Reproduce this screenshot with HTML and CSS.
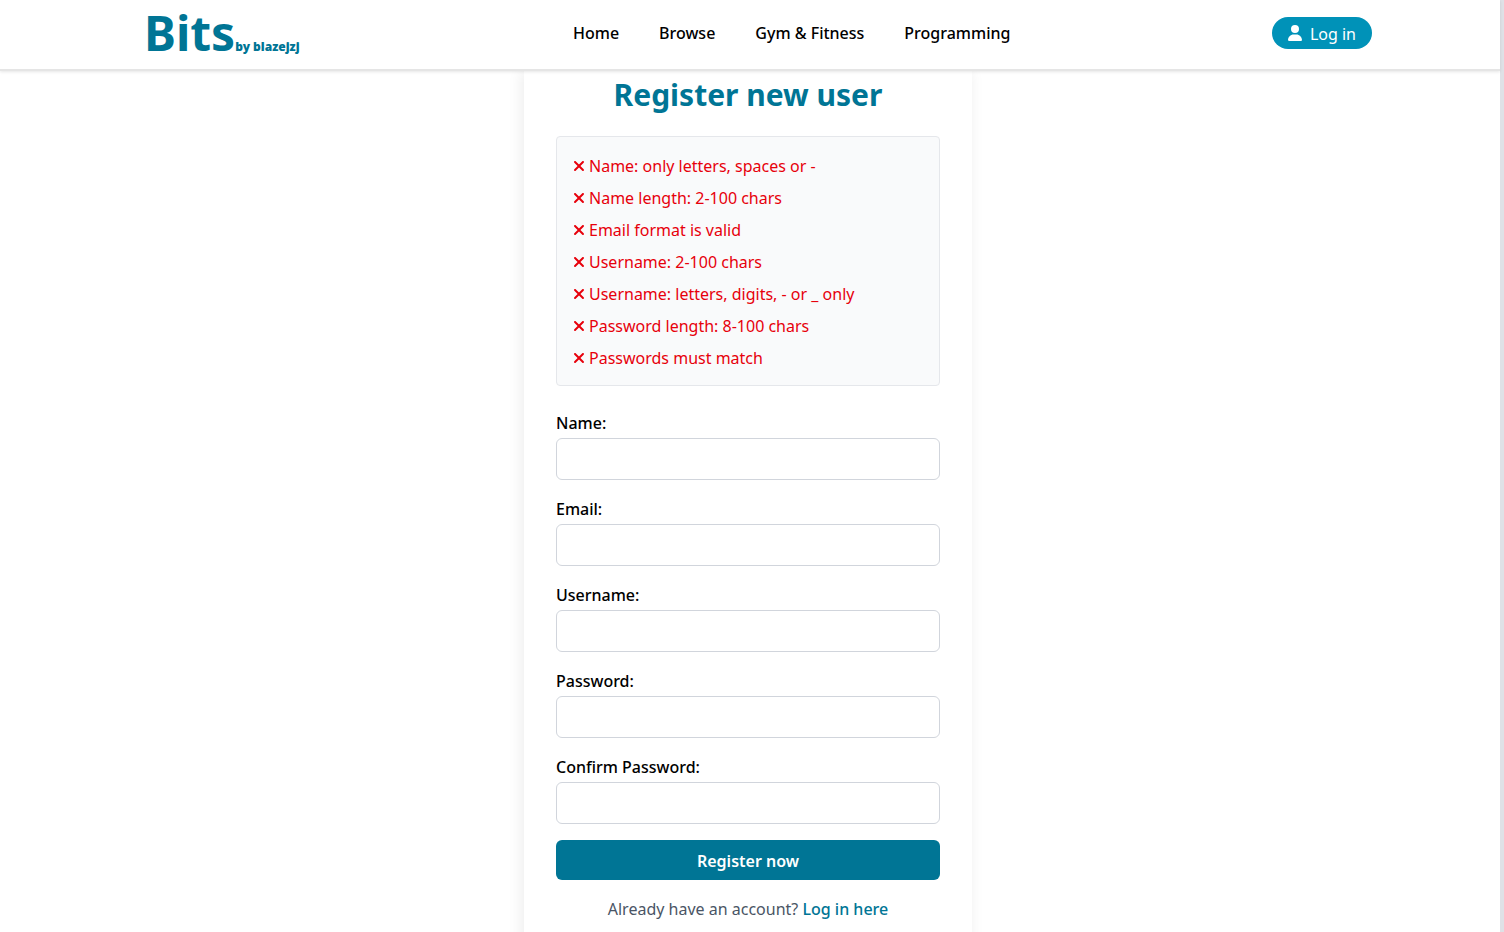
FILE: index.html
```html
<!DOCTYPE html>
<html lang="en">
<head>
<meta charset="utf-8">
<meta name="viewport" content="width=device-width, initial-scale=1">
<title>Register new user - Bits</title>
<link rel="stylesheet" href="styles.css">
</head>
<body>
<svg class="sprite" aria-hidden="true">
  <symbol id="xmark" viewBox="0 0 384 512"><path d="M342.6 150.6c12.5-12.5 12.5-32.800 0-45.300s-32.800-12.500-45.300 0L192 210.700 86.600 105.400c-12.500-12.500-32.800-12.500-45.300 0s-12.500 32.800 0 45.300L146.700 256 41.400 361.400c-12.500 12.500-12.500 32.800 0 45.300s32.800 12.500 45.300 0L192 301.300 297.400 406.600c12.500 12.500 32.800 12.500 45.300 0s12.500-32.800 0-45.300L237.300 256 342.600 150.600z"/></symbol>
  <symbol id="user" viewBox="0 0 448 512"><path d="M224 256A128 128 0 1 0 224 0a128 128 0 1 0 0 256zm-45.700 48C79.800 304 0 383.800 0 482.300C0 498.700 13.300 512 29.700 512H418.300c16.400 0 29.700-13.300 29.700-29.700C448 383.800 368.200 304 269.700 304H178.300z"/></symbol>
</svg>
<div class="page">
  <header class="header">
    <a class="logo" href="#"><span class="logo-name">Bits</span><span class="logo-author">by blazejzj</span></a>
    <nav class="nav">
      <a href="#">Home</a>
      <a href="#">Browse</a>
      <a href="#">Gym &amp; Fitness</a>
      <a href="#">Programming</a>
    </nav>
    <a class="login" href="#"><svg class="icon-user" aria-hidden="true"><use href="#user"/></svg>Log in</a>
  </header>
  <main class="main">
    <form class="card">
      <h1 class="title">Register new user</h1>
      <ul class="rules">
        <li><svg class="icon-x" aria-hidden="true"><use href="#xmark"/></svg>Name: only letters, spaces or -</li>
        <li><svg class="icon-x" aria-hidden="true"><use href="#xmark"/></svg>Name length: 2-100 chars</li>
        <li><svg class="icon-x" aria-hidden="true"><use href="#xmark"/></svg>Email format is valid</li>
        <li><svg class="icon-x" aria-hidden="true"><use href="#xmark"/></svg>Username: 2-100 chars</li>
        <li><svg class="icon-x" aria-hidden="true"><use href="#xmark"/></svg>Username: letters, digits, - or _ only</li>
        <li><svg class="icon-x" aria-hidden="true"><use href="#xmark"/></svg>Password length: 8-100 chars</li>
        <li><svg class="icon-x" aria-hidden="true"><use href="#xmark"/></svg>Passwords must match</li>
      </ul>
      <div class="fields">
        <div class="field"><label for="name">Name:</label><input id="name" type="text"></div>
        <div class="field"><label for="email">Email:</label><input id="email" type="email"></div>
        <div class="field"><label for="username">Username:</label><input id="username" type="text"></div>
        <div class="field"><label for="password">Password:</label><input id="password" type="password"></div>
        <div class="field"><label for="confirm">Confirm Password:</label><input id="confirm" type="password"></div>
        <button class="submit" type="submit">Register now</button>
        <p class="alt">Already have an account? <a href="#">Log in here</a></p>
      </div>
    </form>
  </main>
</div>
</body>
</html>
```
FILE: styles.css
```css
*, *::before, *::after {
  box-sizing: border-box;
}

body {
  margin: 0;
  background: #dfe1e6;
  color: #000;
  font: 16px/26px "Noto Sans", sans-serif;
}

a {
  color: inherit;
  text-decoration: none;
}

.sprite {
  position: absolute;
  width: 0;
  height: 0;
}

.page {
  min-height: 100vh;
  margin-right: 4px;
  background: #fff;
}

.header {
  position: relative;
  z-index: 1;
  display: flex;
  align-items: center;
  justify-content: space-between;
  padding: 0 128px 3px;
  min-height: 71px;
  background: #fff;
  border-bottom: 2px solid #e5e5e5;
  box-shadow: 0 1px 3px rgb(0 0 0 / 10%);
}

.logo {
  display: flex;
  align-items: baseline;
  padding: 0 12px 0 16px;
  color: #007595;
}

.logo-name {
  font-size: 48px;
  font-weight: 700;
  line-height: 48px;
}

.logo-author {
  font-size: 12px;
  font-weight: 900;
  line-height: 16px;
}

.nav {
  display: flex;
  gap: 40px;
  font-weight: 500;
}

.login {
  display: flex;
  align-items: center;
  gap: 8px;
  padding: 4px 16px 2px;
  border-radius: 16px;
  background: #0092b8;
  color: #fff;
}

.icon-user {
  width: 14px;
  height: 16px;
  margin-bottom: 2px;
  fill: currentColor;
}

.main {
  display: flex;
  justify-content: center;
  padding-right: 4px;
  overflow: hidden;
}

.card {
  width: 448px;
  padding: 5px 32px 32px;
  background: #fff;
  box-shadow: -2px 0 14px rgb(0 0 0 / 8%);
}

.title {
  margin: 0 0 22px;
  color: #007595;
  font-size: 30px;
  font-weight: 700;
  line-height: 38px;
  text-align: center;
}

.rules {
  display: flex;
  flex-direction: column;
  gap: 6px;
  margin: 0 0 24px;
  padding: 16px 16px 14px;
  border: 1px solid #e5e7eb;
  border-radius: 4px;
  background: #f9fafb;
  color: #e7000b;
  list-style: none;
}

.rules li {
  display: flex;
  align-items: center;
  gap: 4px;
}

.icon-x {
  width: 12px;
  height: 16px;
  fill: currentColor;
}

.fields {
  display: flex;
  flex-direction: column;
  gap: 16px;
}

.field {
  display: flex;
  flex-direction: column;
  gap: 2px;
  font-weight: 500;
}

.field input {
  width: 100%;
  padding: 7px 8px;
  border: 1px solid #d1d5dc;
  border-radius: 6px;
  background: #fff;
  font: inherit;
  font-weight: 400;
}

.submit {
  padding: 8px 16px 6px;
  border: 0;
  border-radius: 6px;
  background: #007595;
  color: #fff;
  font: inherit;
  font-weight: 600;
}

.alt {
  margin: 0;
  color: #4a5565;
  text-align: center;
}

.alt a {
  color: #007595;
  font-weight: 500;
}
```
